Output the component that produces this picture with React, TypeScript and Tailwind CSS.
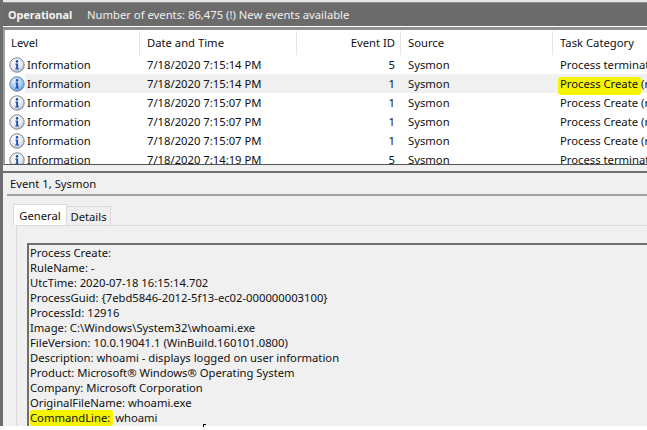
import React from 'react';

const font = "font-['Noto_Sans',sans-serif]";

const rows = [
    { date: '7/18/2020 7:15:14 PM', id: '5', task: 'Process terminated (rule: ProcessTerminate)' },
    { date: '7/18/2020 7:15:14 PM', id: '1', task: 'Process Create (rule: ProcessCreate)', selected: true },
    { date: '7/18/2020 7:15:07 PM', id: '1', task: 'Process Create (rule: ProcessCreate)' },
    { date: '7/18/2020 7:15:07 PM', id: '1', task: 'Process Create (rule: ProcessCreate)' },
    { date: '7/18/2020 7:15:07 PM', id: '1', task: 'Process Create (rule: ProcessCreate)' },
    { date: '7/18/2020 7:14:19 PM', id: '5', task: 'Process terminated (rule: ProcessTerminate)' },
];

const details = [
    'Process Create:',
    'RuleName: -',
    'UtcTime: 2020-07-18 16:15:14.702',
    'ProcessGuid: {7ebd5846-2012-5f13-ec02-000000003100}',
    'ProcessId: 12916',
    'Image: C:\\Windows\\System32\\whoami.exe',
    'FileVersion: 10.0.19041.1 (WinBuild.160101.0800)',
    'Description: whoami - displays logged on user information',
    'Product: Microsoft® Windows® Operating System',
    'Company: Microsoft Corporation',
    'OriginalFileName: whoami.exe',
];

const InfoIcon = ({ active }: { active?: boolean }) => (
    <svg width="16" height="16" viewBox="0 0 16 16" className="shrink-0">
        <defs>
            <radialGradient id="infoGrey" cx="40%" cy="30%" r="80%">
                <stop offset="0%" stopColor="#ffffff" />
                <stop offset="60%" stopColor="#e4e8ee" />
                <stop offset="100%" stopColor="#a9b2bf" />
            </radialGradient>
            <radialGradient id="infoBlue" cx="40%" cy="30%" r="80%">
                <stop offset="0%" stopColor="#e6f2fb" />
                <stop offset="60%" stopColor="#9cc6ea" />
                <stop offset="100%" stopColor="#4f8cc9" />
            </radialGradient>
        </defs>
        <circle cx="8" cy="8" r="7.2" fill={active ? 'url(#infoBlue)' : 'url(#infoGrey)'} stroke={active ? '#5c86b0' : '#7d8590'} strokeWidth="1" />
        <circle cx="8" cy="4.4" r="1.3" fill="#1f4fa8" />
        <path d="M6.4 6.6H9.1V11.4H10V12.5H6.2V11.4H7.2V7.7H6.4Z" fill="#1f4fa8" />
    </svg>
);

const App: React.FC = () => {
    return (
        <div className={`w-[647px] h-[430px] overflow-hidden bg-white flex flex-col text-[11.25px] leading-[15px] text-[#111] ${font}`}>
            <div className="h-[426px] flex flex-col shrink-0 bg-[#f0f0f0] border-l-[3px] border-[#6d6d6d]">
                {/* top bar */}
                <div className="h-[2px] bg-[#e8e8e8] shrink-0"></div>
                <div className="h-[24px] shrink-0 bg-[#6b6b6b] border-t border-[#8a8a8a] flex items-center pl-[5px] text-white">
                    <span className="font-bold w-[79px] text-[10.8px] text-[#f4f4f4]">Operational</span>
                    <span className="text-[#f0f0f0]">Number of events: 86,475 (!) New events available</span>
                </div>
                <div className="h-[1px] bg-white shrink-0"></div>
                <div className="h-[3px] bg-[#8f8f8f] shrink-0"></div>

                {/* event list */}
                <div className="h-[135px] shrink-0 bg-white border-l-[2px] border-[#a0a0a0] border-b border-b-[#555] overflow-hidden">
                    <div className="flex h-[25px] items-center">
                        <div className="w-[135px] h-[24px] pl-[6px] flex items-center border-r border-[#e5e5e5]">Level</div>
                        <div className="w-[157px] h-[24px] pl-[7px] flex items-center border-r border-[#e5e5e5]">Date and Time</div>
                        <div className="w-[104px] h-[24px] pr-[5px] flex items-center justify-end border-r border-[#e5e5e5]">Event ID</div>
                        <div className="w-[152px] h-[24px] pl-[7px] flex items-center border-r border-[#e5e5e5]">Source</div>
                        <div className="flex-1 pl-[7px] whitespace-nowrap">Task Category</div>
                    </div>
                    {rows.map((r, i) => (
                        <div key={i} className="flex h-[19px] items-center whitespace-nowrap">
                            <div className="w-[20px] pl-[4px] flex items-center shrink-0"><InfoIcon active={r.selected} /></div>
                            <div className={`flex flex-1 h-[19px] items-center ${r.selected ? 'bg-[#f0f0f0]' : ''}`}>
                                <div className="w-[117px] pl-[2px] shrink-0">Information</div>
                                <div className="w-[155px] pl-[5px] shrink-0">{r.date}</div>
                                <div className="w-[104px] pr-[6px] text-right shrink-0">{r.id}</div>
                                <div className="w-[152px] pl-[7px] shrink-0">Sysmon</div>
                                <div className="pl-[7px] relative">
                                    {r.selected && <span className="absolute left-[5px] top-[1px] w-[83px] h-[18px] bg-[#f4f400] rounded-[3px]"></span>}
                                    <span className="relative">{r.task}</span>
                                </div>
                            </div>
                        </div>
                    ))}
                </div>

                {/* preview pane */}
                <div className="h-[8px] shrink-0 bg-[#f0f0f0] border-b-[2px] border-[#6f6f6f]"></div>
                <div className="flex-1 min-h-0 flex flex-col pl-[2px]">
                    <div className="h-[23px] ml-[2px] shrink-0 flex items-center pl-[3px] border-b-[2px] border-[#a0a0a0]">Event 1, Sysmon</div>
                    <div className="flex items-end h-[29px] shrink-0 pl-[8px]">
                        <div className="w-[54px] h-[21px] bg-white border border-b-0 border-[#d9d9d9] flex items-center justify-center">General</div>
                        <div className="w-[44px] h-[19px] bg-[#f0f0f0] border border-l-0 border-b-0 border-[#d9d9d9] flex items-center justify-center">Details</div>
                    </div>
                    <div className="flex-1 min-h-0 ml-[11px] border-t border-l border-[#d9d9d9] pl-[10px] pt-[17px]">
                        <div className="h-full border-2 border-b-0 border-r-0 border-[#6f6f6f] pl-[1px]">
                            {details.map((line) => (
                                <div key={line} className="h-[15px] whitespace-nowrap">{line}</div>
                            ))}
                            <div className="h-[15px] whitespace-nowrap">
                                <span className="relative z-10 inline-block h-[16px] bg-[#f4f400] rounded-[2px] pr-[3px] mr-[-1px]">CommandLine:</span> whoami
                            </div>
                        </div>
                    </div>
                </div>
            </div>
            <div className="relative flex-1 bg-white">
                <span className="absolute left-[203px] top-[-2px] w-[3px] h-[3px] border-l border-t border-black"></span>
            </div>
        </div>
    );
};

export default App;
